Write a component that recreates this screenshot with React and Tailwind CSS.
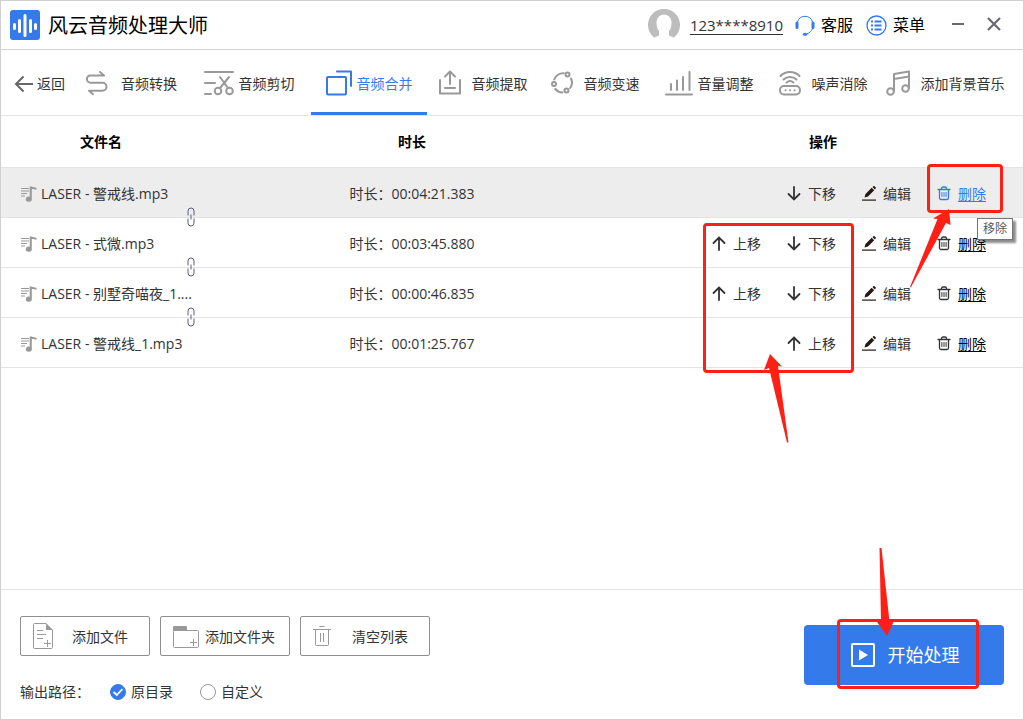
import React, { useState } from 'react';

const tabs = [
  { name: '音频转换', icon: 'convert', width: 'w-28', gap: 'gap-[13px]' },
  { name: '音频剪切', icon: 'cut', width: 'w-31', gap: 'gap-[5px]' },
  { name: '音频合并', icon: 'merge', width: 'w-29', gap: 'gap-[5px]' },
  { name: '音频提取', icon: 'extract', width: 'w-28', gap: 'gap-[11px]' },
  { name: '音频变速', icon: 'speed', width: 'w-28', gap: 'gap-[11px]' },
  { name: '音量调整', icon: 'volume', width: 'w-29', gap: 'gap-[5px]' },
  { name: '噪声消除', icon: 'noise', width: 'w-28', gap: 'gap-[11px]' },
  { name: '添加背景音乐', icon: 'music', width: 'w-33', gap: 'gap-[11px]' },
];

const files = [
  { name: 'LASER - 警戒线.mp3', duration: '00:04:21.383', moves: ['down'], removing: true },
  { name: 'LASER - 式微.mp3', duration: '00:03:45.880', moves: ['up', 'down'] },
  { name: 'LASER - 别墅奇喵夜_1....', duration: '00:00:46.835', moves: ['up', 'down'] },
  { name: 'LASER - 警戒线_1.mp3', duration: '00:01:25.767', moves: ['up'] },
];

const TabIcon = ({ name }) => {
  const common = { fill: 'none', stroke: 'currentColor', strokeWidth: 2, strokeLinecap: 'round', strokeLinejoin: 'round' };
  switch (name) {
    case 'convert':
      return (
        <svg width="23" height="26" viewBox="0 0 23 26" {...common}>
          <path d="M15 2l4 3.500H5.500a3.600 3.600 0 0 0 0 7.200H17.500a4 4 0 0 1 0 8H4l4 3.500" />
        </svg>
      );
    case 'cut':
      return (
        <svg width="30" height="26" viewBox="0 0 30 26" {...common}>
          <path d="M1 2h28M1 13h10M1 24h6M16 7l8 11M25 7l-9 11" />
          <circle cx="14" cy="21" r="3.300" />
          <circle cx="25.500" cy="21" r="3.300" />
        </svg>
      );
    case 'merge':
      return (
        <svg width="26" height="26" viewBox="0 0 26 26" {...common}>
          <rect x="1" y="7" width="19" height="17.500" rx="1" />
          <path d="M11 1.500h14V16" />
        </svg>
      );
    case 'extract':
      return (
        <svg width="22" height="26" viewBox="0 0 22 26" {...common}>
          <path d="M1 10v13.500h20V10M6 18h10M11 14V2M6 6.500l5-5 5 5" />
        </svg>
      );
    case 'speed':
      return (
        <svg width="22" height="24" viewBox="0 0 22 24" {...common}>
          <path d="M3.200 8.500a9.500 9.500 0 0 1 9.500-6.200M20 7.500a9.500 9.500 0 0 1-.8 9.500M11.500 21.500A9.500 9.500 0 0 1 4.300 18" />
          <circle cx="16.500" cy="3.500" r="2" />
          <circle cx="3" cy="13" r="2" />
          <circle cx="15.500" cy="19.500" r="2" />
        </svg>
      );
    case 'volume':
      return (
        <svg width="28" height="26" viewBox="0 0 28 26" {...common}>
          <path d="M1 24.500h26M6 14v6M12 10.500V20M18 7v13M24.500 2v18" />
        </svg>
      );
    case 'noise':
      return (
        <svg width="22" height="26" viewBox="0 0 22 26" {...common}>
          <rect x="1" y="16" width="20" height="8.500" rx="4" />
          <path d="M6.500 20.300h.1M11 20.300h.1M15.500 20.300h.1M1.500 6a13.500 13.500 0 0 1 19 0M4.500 9.500a9.500 9.500 0 0 1 13 0M7.500 12.500a5.500 5.500 0 0 1 7 0" />
        </svg>
      );
    default:
      return (
        <svg width="24" height="26" viewBox="0 0 24 26" {...common}>
          <path d="M8 21V4l15-2.500V18M8 9l15-2.500" />
          <circle cx="4.500" cy="21.500" r="3.300" />
          <circle cx="19.500" cy="18.500" r="3.300" />
        </svg>
      );
  }
};

const Arrow = ({ up }) => (
  <svg width="14" height="16" viewBox="0 0 14 16" fill="none" stroke="#333" strokeWidth="1.800" strokeLinecap="round">
    {up ? <path d="M7 14V1.500M1.500 7L7 1.500 12.500 7" /> : <path d="M7 1v12.500M1.500 8L7 13.500 12.500 8" />}
  </svg>
);

const PencilIcon = () => (
  <svg width="15" height="16" viewBox="0 0 15 16" fill="#231815">
    <path d="M2.500 11.500l1-3.500L9.700 1.700l2.500 2.500L6 10.500zM10.500 1l.8-.7a1 1 0 0 1 1.300 0l1 1a1 1 0 0 1 0 1.300l-.8.8z" />
    <path d="M0 13.500h14v1.200H0z" />
  </svg>
);

const BinIcon = () => (
  <svg width="14" height="16" viewBox="0 0 14 16" fill="none" stroke="currentColor" strokeWidth="1.300" strokeLinecap="round">
    <path d="M1 3.500h12M4.500 3.300v-.8A1.500 1.500 0 0 1 6 1h2a1.500 1.500 0 0 1 1.500 1.500v.8M2.500 3.500V12a1.500 1.500 0 0 0 1.500 1.500h6a1.500 1.500 0 0 0 1.500-1.500V3.500" />
    <path d="M4.900 6.500v4M7 6.500v4M9.100 6.500v4" strokeWidth="1" />
  </svg>
);

const FileIcon = () => (
  <svg width="17" height="17" viewBox="0 0 17 17" className="shrink-0" fill="#999">
    <path d="M1 2h8v1H1zM1 4.500h8v1H1zM1 7h6v1H1zM1 9.500h4v1H1z" />
    <path d="M9.700 0.500h2c1.200 1 3.300 .8 4.800 1.500v1.800c-1.500-.5-3-.4-4.700-.8V13a3 2.600 0 1 1-2.100-2.300z" />
  </svg>
);

const ChainIcon = () => (
  <svg width="8" height="20" viewBox="0 0 8 20" className="absolute -bottom-2.5 right-1.5 z-10" fill="none" stroke="#5a5f78">
    <path d="M1 8.500V4a3 3 0 0 1 6 0v4.500M1 11.500V16a3 3 0 0 0 6 0v-4.500M4 7.500v5" />
  </svg>
);

const TitleBar = () => (
  <header className="flex h-[49px] items-center border-b border-[#d2d2d2] pl-[9px] pr-[21px]">
    <svg width="30" height="30" viewBox="0 0 30 30">
      <rect width="30" height="30" rx="3" fill="#347aeb" />
      <path d="M4.500 14.500v4M9.500 10.500v11M15 5.500v20M20.500 10.500v11M25.500 14.500v4" stroke="#fff" strokeWidth="3" strokeLinecap="round" />
    </svg>
    <h1 className="ml-2 pt-0.5 text-xl leading-7 text-black">风云音频处理大师</h1>
    <div className="ml-auto flex items-center">
      <svg width="32" height="32" viewBox="0 0 32 32" fill="none">
        <path d="M6 28.500A16 16 0 1 1 26 28.500L21 26.500V22C23 20 23.500 16 23.500 13a7.500 7.500 0 0 0-15 0c0 3 .5 7 2.500 9v4.500z" fill="#bdbdbd" />
      </svg>
      <a href="#account" className="ml-2.5 text-[15px] leading-6 text-[#333] underline underline-offset-3 [text-decoration-skip-ink:none]">
        123****8910
      </a>
      <button type="button" className="ml-3 flex items-center gap-1.5 text-base leading-6 text-black">
        <svg width="20" height="21" viewBox="0 0 20 21" fill="none" stroke="#347aeb">
          <path d="M2.500 7a7.800 7.800 0 0 1 15 0M17.500 13.500c-1 2.500-3 4.500-5.500 5.300" />
          <path d="M2 8v4.500M18 8v4.500" strokeWidth="3" strokeLinecap="round" />
          <ellipse cx="10" cy="19.300" rx="2.200" ry="1.500" fill="#347aeb" stroke="none" />
        </svg>
        客服
      </button>
      <button type="button" className="ml-[13px] flex items-center gap-1.5 text-base leading-6 text-black">
        <svg width="21" height="21" viewBox="0 0 21 21" fill="none" stroke="#347aeb" strokeWidth="1.300">
          <circle cx="10.500" cy="10.500" r="9.500" />
          <path d="M5 6.500h2M5 10.500h2M5 14.500h2M8.500 6.500h7M8.500 10.500h7M8.500 14.500h7" strokeWidth="1.800" />
        </svg>
        菜单
      </button>
      <button type="button" aria-label="最小化" className="ml-[25px]">
        <svg width="16" height="16" viewBox="0 0 16 16" stroke="#6b6870" strokeWidth="2">
          <path d="M2 7h12" />
        </svg>
      </button>
      <button type="button" aria-label="关闭" className="ml-5">
        <svg width="16" height="16" viewBox="0 0 16 16" stroke="#6b6870" strokeWidth="2.200">
          <path d="M2 1l12 12M14 1L2 13" />
        </svg>
      </button>
    </div>
  </header>
);

const TabBar = ({ active, onSelect }) => (
  <nav className="flex h-[66px] border-b border-[#e4e4e4]">
    <button type="button" className="flex w-[74px] items-center gap-[3px] pl-[13px] pt-0.5 text-sm text-[#333]">
      <svg width="20" height="18" viewBox="0 0 20 18" fill="none" stroke="#666" strokeWidth="2">
        <path d="M19 9H2M9.500 1.500L2 9l7.500 7.500" />
      </svg>
      返回
    </button>
    {tabs.map((tab) => (
      <button
        key={tab.icon}
        type="button"
        onClick={() => onSelect(tab.icon)}
        className={`flex shrink-0 items-center justify-center border-b-3 border-t-3 border-t-transparent text-sm whitespace-nowrap ${tab.width} ${tab.gap} ${
          active === tab.icon ? 'border-b-[#347aeb] text-[#347aeb]' : 'border-b-transparent text-[#333]'
        }`}
      >
        <span className={active === tab.icon ? 'text-[#347aeb]' : 'text-[#999]'}>
          <TabIcon name={tab.icon} />
        </span>
        <span className="pt-0.5">{tab.name}</span>
      </button>
    ))}
  </nav>
);

const FileRow = ({ file, linked }) => (
  <tr className={`h-[50px] border-b border-[#e4e4e4] ${file.removing ? 'bg-[#ededed]' : ''}`}>
    <td className="relative pt-1 pl-[19px]">
      <div className="flex items-center gap-1 whitespace-nowrap">
        <FileIcon />
        {file.name}
      </div>
      {linked && <ChainIcon />}
    </td>
    <td className="pt-1 text-center">时长：{file.duration}</td>
    <td className="pt-1">
      <div className="flex justify-end pr-[11px]">
        {file.moves.map((move) => (
          <button key={move} type="button" className="flex w-[75px] items-center gap-[7px]">
            <Arrow up={move === 'up'} />
            {move === 'up' ? '上移' : '下移'}
          </button>
        ))}
        <button type="button" className="flex w-[75px] items-center gap-1.5">
          <PencilIcon />
          编辑
        </button>
        <button type="button" className={`relative flex w-[75px] items-center gap-[7px] ${file.removing ? 'text-[#347aeb]' : 'text-[#333]'}`}>
          <BinIcon />
          <span className={`underline underline-offset-2 ${file.removing ? '' : 'text-black'}`}>删除</span>
          {file.removing && (
            <span
              role="tooltip"
              className="absolute top-[34px] left-10 z-20 border border-[#767676] bg-white px-[5px] text-xs leading-5 whitespace-nowrap text-[#575757] shadow-[3px_3px_2px_rgba(0,0,0,0.45)]"
            >
              移除
            </span>
          )}
        </button>
      </div>
    </td>
  </tr>
);

const FileTable = () => (
  <main className="relative flex-1">
    <table className="w-full table-fixed border-collapse text-sm text-[#333]">
      <thead>
        <tr className="h-[51px] border-b border-[#e4e4e4] text-black">
          <th className="w-[200px] pt-0.5 font-bold">文件名</th>
          <th className="pt-0.5 font-bold">时长</th>
          <th className="w-[400px] pt-0.5 font-bold">操作</th>
        </tr>
      </thead>
      <tbody>
        {files.map((file, i) => (
          <FileRow key={file.name} file={file} linked={i < files.length - 1} />
        ))}
      </tbody>
    </table>

    {/* Guide marks */}
    <div className="pointer-events-none absolute top-12 right-5 z-30 h-[49px] w-[76px] rounded-sm border-3 border-[#ff2015]" />
    <div className="pointer-events-none absolute top-[107px] right-[169px] z-30 h-[150px] w-[151px] rounded-sm border-3 border-[#ff2015]" />
    <svg width="44" height="82" viewBox="0 0 44 82" fill="#ff2015" className="pointer-events-none absolute top-[92px] right-[70px] z-30">
      <path d="M40 1L24 10.500l4.500.5L1 79l.8.5L37 15l4.500 2z" />
    </svg>
    <svg width="30" height="92" viewBox="0 0 30 92" fill="#ff2015" className="pointer-events-none absolute top-[236px] right-[230px] z-30">
      <path d="M7 2L1 18l5-2 18 74.500h1.500L15 14l4 .5z" />
    </svg>
  </main>
);

const OutlineButton = ({ icon, text }) => (
  <button type="button" className="flex h-10 w-[130px] items-center rounded-xs border border-[#8f8f8f] pr-2 pl-3 text-sm text-[#333]">
    <span className="w-[26px]">{icon}</span>
    <span className="flex-1 pt-0.5 text-center whitespace-nowrap">{text}</span>
  </button>
);

const PathOption = ({ value, label, checked, onChange }) => (
  <label className="flex items-center gap-[5px]">
    <span className="relative flex">
      <input
        type="radio"
        name="output"
        value={value}
        checked={checked}
        onChange={onChange}
        className="size-4 appearance-none rounded-full border border-[#999] bg-white checked:border-[#347aeb] checked:bg-[#347aeb]"
      />
      {checked && (
        <svg width="16" height="16" viewBox="0 0 16 16" className="pointer-events-none absolute inset-0" fill="none" stroke="#fff" strokeWidth="1.800">
          <path d="M3.500 8l3.300 3 5.700-6" />
        </svg>
      )}
    </span>
    {label}
  </label>
);

const Footer = () => {
  const [output, setOutput] = useState('source');
  return (
    <footer className="flex h-[130px] items-center justify-between border-t border-[#e4e4e4] px-[19px]">
      <div className="flex flex-col gap-[26px] pt-2">
        <div className="flex gap-2.5">
          <OutlineButton
            text="添加文件"
            icon={
              <svg width="20" height="26" viewBox="0 0 20 26" fill="none" stroke="#999">
                <path d="M13 .5H1.500a1 1 0 0 0-1 1v23a1 1 0 0 0 1 1h17a1 1 0 0 0 1-1V7M4 7.500h6M4 11.500h9M4 15.500h6M11 20.500h7M14.500 17v7" />
                <path d="M13 0v7h7z" fill="#999" stroke="none" />
              </svg>
            }
          />
          <OutlineButton
            text="添加文件夹"
            icon={
              <svg width="26" height="26" viewBox="0 0 26 26" fill="none" stroke="#999">
                <rect x=".5" y="7.500" width="25" height="17" rx="1" />
                <path d="M17 19.500h7M20.500 16v7" />
                <path d="M0 4a1 1 0 0 1 1-1h12a1 1 0 0 1 1 1v4H0z" fill="#999" stroke="none" />
              </svg>
            }
          />
          <OutlineButton
            text="清空列表"
            icon={
              <svg width="18" height="22" viewBox="0 0 18 22" fill="none" stroke="#999">
                <path d="M6.500 1.500h5M0 4.500h18M2.500 4.500v15a1 1 0 0 0 1 1h11a1 1 0 0 0 1-1v-15M7.500 8v9M10.500 8v9" />
              </svg>
            }
          />
        </div>
        <div className="flex items-center text-sm leading-5 text-[#333]">
          <span className="w-[90px]">输出路径：</span>
          <PathOption value="source" label="原目录" checked={output === 'source'} onChange={() => setOutput('source')} />
          <span className="w-[27px]" />
          <PathOption value="custom" label="自定义" checked={output === 'custom'} onChange={() => setOutput('custom')} />
        </div>
      </div>
      <div className="relative">
        <button type="button" className="flex h-15 w-50 items-center justify-center gap-[13px] rounded-sm bg-[#347aeb] pl-0.5 text-lg text-white">
          <svg width="24" height="24" viewBox="0 0 24 24">
            <rect x="1" y="1" width="22" height="22" rx="1" fill="none" stroke="#fff" strokeWidth="2" />
            <path d="M8 6.500v11l9-5.500z" fill="#fff" />
          </svg>
          开始处理
        </button>
        <div className="pointer-events-none absolute -top-1.5 left-[33px] h-[70px] w-[142px] rounded-sm border-3 border-[#ff2015]" />
        <svg width="18" height="90" viewBox="0 0 18 90" fill="#ff2015" className="pointer-events-none absolute -top-[78px] left-[73px]">
          <path d="M2.500 1h2l8 73.500 4 .5-6.500 14L0 75l4-.5z" />
        </svg>
      </div>
    </footer>
  );
};

const App = () => {
  const [active, setActive] = useState('merge');
  return (
    <div className="flex min-h-screen flex-col border border-[#d0d0d0] bg-white font-['Open_Sans','Noto_Sans_CJK_SC',sans-serif]">
      <TitleBar />
      <TabBar active={active} onSelect={setActive} />
      <FileTable />
      <Footer />
    </div>
  );
};

export default App;
